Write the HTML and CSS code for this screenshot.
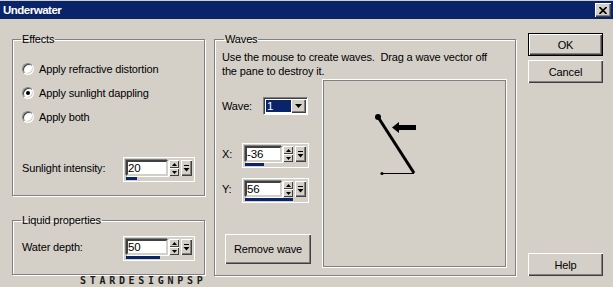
FILE: index.html
```html
<!DOCTYPE html>
<html lang="en">
<head>
    <meta charset="UTF-8">
    <meta name="viewport" content="width=device-width, initial-scale=1.0">
    <title>Underwater</title>
    <link rel="stylesheet" href="styles.css">
</head>
<body>
<div class="window">

    <div class="titlebar">
        <span class="title">Underwater</span>
        <span class="close-btn">
            <svg width="8" height="7" viewBox="0 0 8 7"><path d="M0.5 0 L7.5 7 M7.5 0 L0.5 7" stroke="#000" stroke-width="1.6"/></svg>
        </span>
    </div>

    <div class="main">

        <div class="left-col">
            <fieldset class="group group-effects">
                <legend>Effects</legend>
                <div class="radio-row first"><span class="radio"></span>Apply refractive distortion</div>
                <div class="radio-row"><span class="radio checked"></span>Apply sunlight dappling</div>
                <div class="radio-row"><span class="radio"></span>Apply both</div>

                <div class="field-row sunlight-row">
                    <span class="field-label">Sunlight intensity:</span>
                    <div class="spin">
                        <div class="spin-row">
                            <div class="spin-edit">20</div>
                            <div class="spin-arrows">
                                <span class="spin-btn"><svg width="5" height="3" viewBox="0 0 5 3"><path d="M2.5 0 L5 3 L0 3 Z"/></svg></span>
                                <span class="spin-btn"><svg width="5" height="3" viewBox="0 0 5 3"><path d="M0 0 L5 0 L2.5 3 Z"/></svg></span>
                            </div>
                            <span class="spin-drop"><svg width="7" height="8" viewBox="0 0 7 8"><path d="M1 1.5 H6" stroke="#000"/><path d="M0.5 4 H6.5 L3.5 7.5 Z"/></svg></span>
                        </div>
                        <div class="spin-track"><div class="spin-bar" style="width: 11px"></div></div>
                    </div>
                </div>
            </fieldset>

            <fieldset class="group group-liquid">
                <legend>Liquid properties</legend>
                <div class="field-row depth-row">
                    <span class="field-label">Water depth:</span>
                    <div class="spin">
                        <div class="spin-row">
                            <div class="spin-edit">50</div>
                            <div class="spin-arrows">
                                <span class="spin-btn"><svg width="5" height="3" viewBox="0 0 5 3"><path d="M2.5 0 L5 3 L0 3 Z"/></svg></span>
                                <span class="spin-btn"><svg width="5" height="3" viewBox="0 0 5 3"><path d="M0 0 L5 0 L2.5 3 Z"/></svg></span>
                            </div>
                            <span class="spin-drop"><svg width="7" height="8" viewBox="0 0 7 8"><path d="M1 1.5 H6" stroke="#000"/><path d="M0.5 4 H6.5 L3.5 7.5 Z"/></svg></span>
                        </div>
                        <div class="spin-track"><div class="spin-bar" style="width: 34px"></div></div>
                    </div>
                </div>
            </fieldset>

            <div class="watermark">STARDESIGNPSP</div>
        </div>

        <fieldset class="group group-waves">
            <legend>Waves</legend>
            <p class="desc">Use the mouse to create waves.&nbsp; Drag a wave vector off<br>the pane to destroy it.</p>

            <div class="waves-body">
                <div class="wave-controls">
                    <div class="field-row wave-row">
                        <span class="field-label">Wave:</span>
                        <div class="combo">
                            <span class="combo-value">1</span>
                            <span class="combo-btn"><svg width="7" height="4" viewBox="0 0 7 4"><path d="M0 0 H7 L3.5 4 Z"/></svg></span>
                        </div>
                    </div>

                    <div class="field-row xy-row x-row">
                        <span class="field-label">X:</span>
                        <div class="spin spin-small">
                            <div class="spin-row">
                                <div class="spin-edit">-36</div>
                                <div class="spin-arrows">
                                    <span class="spin-btn"><svg width="5" height="3" viewBox="0 0 5 3"><path d="M2.5 0 L5 3 L0 3 Z"/></svg></span>
                                    <span class="spin-btn"><svg width="5" height="3" viewBox="0 0 5 3"><path d="M0 0 L5 0 L2.5 3 Z"/></svg></span>
                                </div>
                                <span class="spin-drop"><svg width="7" height="8" viewBox="0 0 7 8"><path d="M1 1.5 H6" stroke="#000"/><path d="M0.5 4 H6.5 L3.5 7.5 Z"/></svg></span>
                            </div>
                            <div class="spin-track"><div class="spin-bar" style="width: 19px"></div></div>
                        </div>
                    </div>

                    <div class="field-row xy-row y-row">
                        <span class="field-label">Y:</span>
                        <div class="spin spin-small">
                            <div class="spin-row">
                                <div class="spin-edit">56</div>
                                <div class="spin-arrows">
                                    <span class="spin-btn"><svg width="5" height="3" viewBox="0 0 5 3"><path d="M2.5 0 L5 3 L0 3 Z"/></svg></span>
                                    <span class="spin-btn"><svg width="5" height="3" viewBox="0 0 5 3"><path d="M0 0 L5 0 L2.5 3 Z"/></svg></span>
                                </div>
                                <span class="spin-drop"><svg width="7" height="8" viewBox="0 0 7 8"><path d="M1 1.5 H6" stroke="#000"/><path d="M0.5 4 H6.5 L3.5 7.5 Z"/></svg></span>
                            </div>
                            <div class="spin-track"><div class="spin-bar" style="width: 48px"></div></div>
                        </div>
                    </div>

                    <button class="btn remove-btn">Remove wave</button>
                </div>

                <div class="pane">
                    <svg width="181" height="185" viewBox="0 0 181 185">
                        <line x1="54" y1="36" x2="90" y2="92" stroke="#000" stroke-width="3"/>
                        <line x1="58" y1="92.5" x2="90" y2="92.5" stroke="#000" stroke-width="1"/>
                        <circle cx="54" cy="36" r="3"/>
                        <circle cx="58" cy="92.5" r="1.6"/>
                        <polygon points="68,46.5 75,41 75,44 92,44 92,49 75,49 75,52"/>
                    </svg>
                </div>
            </div>
        </fieldset>

        <div class="buttons">
            <button class="btn btn-default">OK</button>
            <button class="btn cancel-btn">Cancel</button>
            <button class="btn help-btn">Help</button>
        </div>

    </div>
</div>
</body>
</html>
```

FILE: styles.css
```css
* {
    box-sizing: border-box;
}

body {
    margin: 0;
    background-color: #d4d0c8;
    font-family: "Liberation Sans", Arial, sans-serif;
    font-size: 11px;
    letter-spacing: -0.15px;
    color: #000;
}

.window {
    width: 613px;
    height: 287px;
    overflow: hidden;
    padding-top: 1px;
}

/* title bar */
.titlebar {
    height: 18px;
    background-color: #0a246a;
    display: flex;
    align-items: center;
    justify-content: space-between;
    padding: 0 2px 0 3px;
}

.title {
    color: #fff;
    font-weight: bold;
    font-size: 11.5px;
    letter-spacing: -0.5px;
}

.close-btn {
    width: 16px;
    height: 14px;
    display: flex;
    align-items: center;
    justify-content: center;
    background-color: #d4d0c8;
    box-shadow: inset 1px 1px 0 #fff, inset -1px -1px 0 #404040, inset -2px -2px 0 #808080;
}

.main {
    display: flex;
    align-items: flex-start;
    padding: 14px 0 0 12px;
}

/* group boxes */
.group {
    margin: 0;
    padding: 0 0 0 9px;
    border: 1px solid #808080;
    box-shadow: 1px 1px 0 #fff, inset 1px 1px 0 #fff;
    min-width: 0;
}

.group legend {
    padding: 0 1px;
    margin-left: -1px;
    line-height: 13px;
}

.left-col {
    width: 193px;
    display: flex;
    flex-direction: column;
}

.group-effects {
    height: 163px;
}

.group-liquid {
    height: 61px;
    margin-top: 18px;
}

.radio-row {
    display: flex;
    align-items: center;
    gap: 5px;
    height: 13px;
    margin-top: 11px;
}

.radio-row.first {
    margin-top: 16px;
}

.radio {
    width: 12px;
    height: 12px;
    border-radius: 50%;
    background-color: #fff;
    border: 1px solid;
    border-color: #808080 #fff #fff #808080;
    box-shadow: inset 1px 1px 0 #404040, inset -1px -1px 0 #d4d0c8;
    display: flex;
    align-items: center;
    justify-content: center;
}

.radio.checked::after {
    content: "";
    width: 4px;
    height: 4px;
    border-radius: 50%;
    background-color: #000;
}

.field-row {
    display: flex;
    align-items: flex-start;
}

.field-label {
    line-height: 13px;
    padding-top: 5px;
}

.sunlight-row {
    margin-top: 34px;
}

.sunlight-row .field-label,
.depth-row .field-label {
    width: 101px;
}

.depth-row {
    margin-top: 9px;
}

/* spin edit with value bar */
.spin {
    border: 1px solid #fff;
    padding: 2px 2px 1px 2px;
}

.spin-row {
    display: flex;
    align-items: flex-start;
}

.spin-edit {
    width: 42px;
    height: 16px;
    background-color: #fff;
    border: 2px solid;
    border-color: #404040 #d4d0c8 #d4d0c8 #404040;
    box-shadow: -1px -1px 0 #808080, 1px 1px 0 #fff;
    line-height: 12px;
    font-size: 11.5px;
    padding-left: 0;
}

.spin-small .spin-edit {
    width: 37px;
}

.spin-arrows {
    width: 10px;
    height: 16px;
    margin-left: 1px;
    display: flex;
    flex-direction: column;
}

.spin-btn {
    height: 8px;
    display: flex;
    align-items: center;
    justify-content: center;
    box-shadow: inset 1px 1px 0 #fff, inset -1px -1px 0 #404040;
}

.spin-drop {
    width: 11px;
    height: 16px;
    margin-left: 2px;
    display: flex;
    align-items: center;
    justify-content: center;
    box-shadow: inset 1px 1px 0 #fff, inset -1px -1px 0 #404040, inset -2px -2px 0 #808080;
}

.spin-track {
    height: 3px;
    margin-top: 1px;
}

.spin-bar {
    height: 3px;
    background-color: #0a246a;
}

.watermark {
    margin-top: 1px;
    padding-left: 68px;
    font-family: "DejaVu Sans Mono", monospace;
    font-weight: bold;
    font-size: 10px;
    line-height: 9px;
    letter-spacing: 3.7px;
    color: #1a1a1a;
}

/* waves */
.group-waves {
    width: 302px;
    height: 243px;
    margin-left: 9px;
    padding: 0 9px 0 7px;
}

.group-waves legend {
    margin-left: 2px;
}

.desc {
    margin: 4px 0 0;
    line-height: 14px;
}

.waves-body {
    display: flex;
    justify-content: space-between;
}

.wave-controls {
    width: 101px;
    display: flex;
    flex-direction: column;
    align-items: flex-start;
}

.wave-row {
    margin-top: 19px;
}

.wave-row .field-label {
    width: 41px;
    padding-top: 3px;
}

.combo {
    width: 45px;
    height: 18px;
    display: flex;
    border: 1px solid;
    border-color: #808080 #fff #fff #808080;
    box-shadow: inset 1px 1px 0 #404040;
    background-color: #fff;
    padding: 2px 1px 1px 2px;
}

.combo-value {
    width: 25px;
    height: 12px;
    background-color: #0a246a;
    color: #fff;
    line-height: 12px;
    font-size: 11.5px;
    padding-left: 1px;
}

.combo-btn {
    flex: 1;
    margin-top: -1px;
    height: 14px;
    display: flex;
    align-items: center;
    justify-content: center;
    background-color: #d4d0c8;
    box-shadow: inset 1px 1px 0 #fff, inset -1px -1px 0 #404040, inset -2px -2px 0 #808080;
}

.xy-row .field-label {
    width: 20px;
}

.x-row {
    margin-top: 28px;
}

.y-row {
    margin-top: 10px;
}

.pane {
    width: 183px;
    height: 187px;
    margin-top: 2px;
    border: 1px solid #808080;
    box-shadow: 0 0 0 1px #fff;
}

.pane svg {
    display: block;
}

/* buttons */
.btn {
    font-family: inherit;
    font-size: 11px;
    letter-spacing: -0.15px;
    color: #000;
    background-color: #d4d0c8;
    border: none;
    padding: 0;
    box-shadow: inset 1px 1px 0 #fff, inset -1px -1px 0 #404040, inset -2px -2px 0 #808080;
}

.remove-btn {
    width: 86px;
    height: 30px;
    margin: 31px 0 0 3px;
}

.buttons {
    width: 75px;
    margin-left: 12px;
    display: flex;
    flex-direction: column;
}

.buttons .btn {
    height: 23px;
}

.btn-default {
    border: 1px solid #000;
}

.cancel-btn {
    margin-top: 4px;
}

.help-btn {
    margin-top: 170px;
}
```
